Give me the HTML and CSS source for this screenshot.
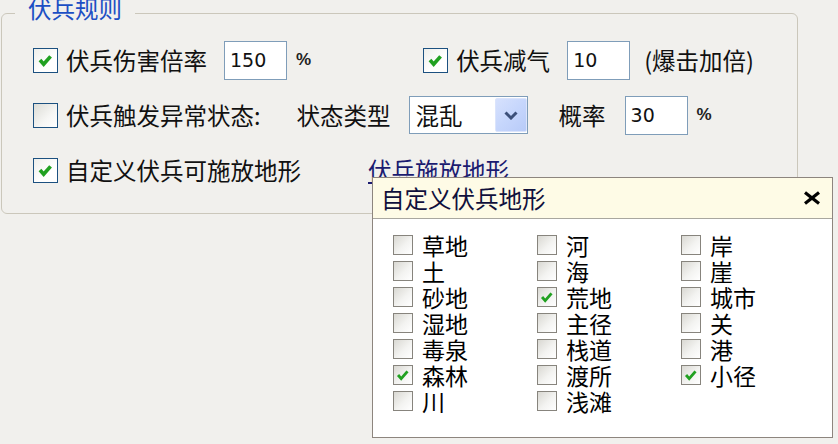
FILE: index.html
```html
<!DOCTYPE html>
<html lang="zh-CN">
<head>
    <meta charset="UTF-8">
    <title>伏兵规则</title>
    <link rel="stylesheet" href="styles.css">
</head>
<body>
    <fieldset class="group">
        <legend class="group-title">伏兵规则</legend>

        <div class="row">
            <label class="check">
                <span class="box checked">
                    <svg viewBox="0 0 25 25"><polyline points="6.5,12 10.5,16.5 18,8" /></svg>
                </span>
                <span class="label">伏兵伤害倍率</span>
            </label>
            <input class="num" type="text" value="150">
            <span class="pct">%</span>

            <label class="check right-group">
                <span class="box checked">
                    <svg viewBox="0 0 25 25"><polyline points="6.5,12 10.5,16.5 18,8" /></svg>
                </span>
                <span class="label">伏兵减气</span>
            </label>
            <input class="num" type="text" value="10">
            <span class="note">(爆击加倍)</span>
        </div>

        <div class="row">
            <label class="check">
                <span class="box"></span>
                <span class="label">伏兵触发异常状态:</span>
            </label>
            <span class="label type-label">状态类型</span>
            <div class="select">
                <span class="select-value">混乱</span>
                <span class="select-btn">
                    <svg viewBox="0 0 14 9"><polyline points="1.5,1.5 7,7 12.5,1.5" /></svg>
                </span>
            </div>
            <span class="label rate-label">概率</span>
            <input class="num" type="text" value="30">
            <span class="pct">%</span>
        </div>

        <div class="row">
            <label class="check">
                <span class="box checked">
                    <svg viewBox="0 0 25 25"><polyline points="6.5,12 10.5,16.5 18,8" /></svg>
                </span>
                <span class="label">自定义伏兵可施放地形</span>
            </label>
            <a class="terrain-link">伏兵施放地形</a>
        </div>
    </fieldset>

    <!-- 地形选择弹出框 -->
    <div class="popup">
        <div class="popup-title">
            <span>自定义伏兵地形</span>
            <svg class="close" viewBox="0 0 18 14"><line x1="2" y1="1.5" x2="16" y2="12.5" /><line x1="16" y1="1.5" x2="2" y2="12.5" /></svg>
        </div>
        <div class="terrain-list">
            <label class="item"><span class="mini"></span>草地</label>
            <label class="item"><span class="mini"></span>土</label>
            <label class="item"><span class="mini"></span>砂地</label>
            <label class="item"><span class="mini"></span>湿地</label>
            <label class="item"><span class="mini"></span>毒泉</label>
            <label class="item"><span class="mini checked"><svg viewBox="0 0 20 20"><polyline points="4.5,10 8,14 15,6" /></svg></span>森林</label>
            <label class="item"><span class="mini"></span>川</label>

            <label class="item"><span class="mini"></span>河</label>
            <label class="item"><span class="mini"></span>海</label>
            <label class="item"><span class="mini checked"><svg viewBox="0 0 20 20"><polyline points="4.5,10 8,14 15,6" /></svg></span>荒地</label>
            <label class="item"><span class="mini"></span>主径</label>
            <label class="item"><span class="mini"></span>栈道</label>
            <label class="item"><span class="mini"></span>渡所</label>
            <label class="item"><span class="mini"></span>浅滩</label>

            <label class="item"><span class="mini"></span>岸</label>
            <label class="item"><span class="mini"></span>崖</label>
            <label class="item"><span class="mini"></span>城市</label>
            <label class="item"><span class="mini"></span>关</label>
            <label class="item"><span class="mini"></span>港</label>
            <label class="item"><span class="mini checked"><svg viewBox="0 0 20 20"><polyline points="4.5,10 8,14 15,6" /></svg></span>小径</label>
        </div>
    </div>
</body>
</html>
```

FILE: styles.css
```css
body {
    margin: 0;
    width: 838px;
    height: 444px;
    overflow: hidden;
    position: relative;
    background-color: #f1f0ed;
    font-family: "Noto Sans CJK SC", sans-serif;
    color: #111;
}

/* 分组框 */
.group {
    box-sizing: border-box;
    width: 797px;
    margin: 3px 0 0 1px;
    padding: 17px 0 23px 0;
    border: 1px solid #cbc7bb;
    border-radius: 6px;
    display: flex;
    flex-direction: column;
    gap: 15px;
}

.group-title {
    margin-left: 13px;
    padding: 0 13px;
    font-size: 23.5px;
    line-height: 20px;
    color: #1c4fc4;
    position: relative;
    top: -5px;
}

.row {
    height: 40px;
    padding-left: 31px;
    display: flex;
    align-items: center;
}

.label {
    font-size: 23.5px;
    line-height: 30px;
    white-space: nowrap;
}

.check {
    display: flex;
    align-items: center;
    gap: 8px;
}

.box {
    box-sizing: border-box;
    width: 25px;
    height: 25px;
    border: 1px solid #1c5180;
    background: linear-gradient(135deg, #dcdcd6 0%, #f6f6f4 60%, #ffffff 100%);
    display: block;
}

.box.checked {
    background: linear-gradient(135deg, #eeeeea 0%, #ffffff 60%);
}

.box svg,
.mini svg {
    display: block;
    width: 100%;
    height: 100%;
}

.box polyline {
    fill: none;
    stroke: #21a121;
    stroke-width: 4;
}

.num {
    box-sizing: border-box;
    width: 63px;
    height: 39px;
    margin: 0 0 0 17px;
    padding: 0 0 0 5px;
    border: 1px solid #7f9db9;
    background: #fff;
    font-family: "DejaVu Sans", sans-serif;
    font-size: 19px;
    color: #111;
    outline: none;
}

.pct {
    margin-left: 9px;
    font-family: "Liberation Sans", sans-serif;
    font-size: 17px;
    font-weight: bold;
    color: #222;
}

.right-group {
    margin-left: 112px;
}

.note {
    margin-left: 14px;
    font-size: 23.5px;
    white-space: nowrap;
}

.type-label {
    margin-left: 36px;
}

.select {
    box-sizing: border-box;
    width: 119px;
    height: 38px;
    margin-left: 18px;
    padding: 0 0 0 6px;
    border: 1px solid #7f9db9;
    background: #fff;
    display: flex;
    align-items: center;
    justify-content: space-between;
}

.select-value {
    font-size: 23.5px;
}

.select-btn {
    box-sizing: border-box;
    width: 32px;
    height: 34px;
    border: 1px solid #dbe4fc;
    border-radius: 2px;
    background: linear-gradient(135deg, #d6e1fd 0%, #c6d6fc 50%, #b8cbf8 100%);
    display: flex;
    align-items: center;
    justify-content: center;
}

.select-btn svg {
    width: 14px;
    height: 9px;
}

.select-btn polyline {
    fill: none;
    stroke: #3c5079;
    stroke-width: 3;
}

.rate-label {
    margin-left: 31px;
}

.rate-label + .num {
    margin-left: 19px;
}

.terrain-link {
    margin-left: 67px;
    font-size: 23.5px;
    color: #1b1b70;
    text-decoration: underline;
    cursor: pointer;
}

/* 弹出框 */
.popup {
    position: absolute;
    left: 372px;
    top: 177px;
    box-sizing: border-box;
    width: 461px;
    height: 261px;
    border: 1px solid #8d857e;
    background: #fff;
}

.popup-title {
    height: 40px;
    padding: 0 11px 0 8px;
    border-bottom: 1px solid #a9a79f;
    background-color: #fefbe6;
    display: flex;
    align-items: center;
    justify-content: space-between;
    font-size: 23.5px;
    color: #10103c;
}

.close {
    width: 18px;
    height: 14px;
}

.close line {
    stroke: #000;
    stroke-width: 3.2;
}

.terrain-list {
    padding: 13px 0 0 20px;
    display: grid;
    grid-template-columns: repeat(3, 144px);
    grid-template-rows: repeat(7, 26px);
    grid-auto-flow: column;
}

.item {
    display: flex;
    align-items: center;
    gap: 9px;
    font-size: 23px;
    line-height: 26px;
    color: #000;
}

.mini {
    box-sizing: border-box;
    width: 20px;
    height: 20px;
    border: 1px solid #87847d;
    background: linear-gradient(135deg, #d9d8d2 0%, #f3f3f1 55%, #ffffff 100%);
    display: block;
}

.mini polyline {
    fill: none;
    stroke: #21a121;
    stroke-width: 3.2;
}
```
